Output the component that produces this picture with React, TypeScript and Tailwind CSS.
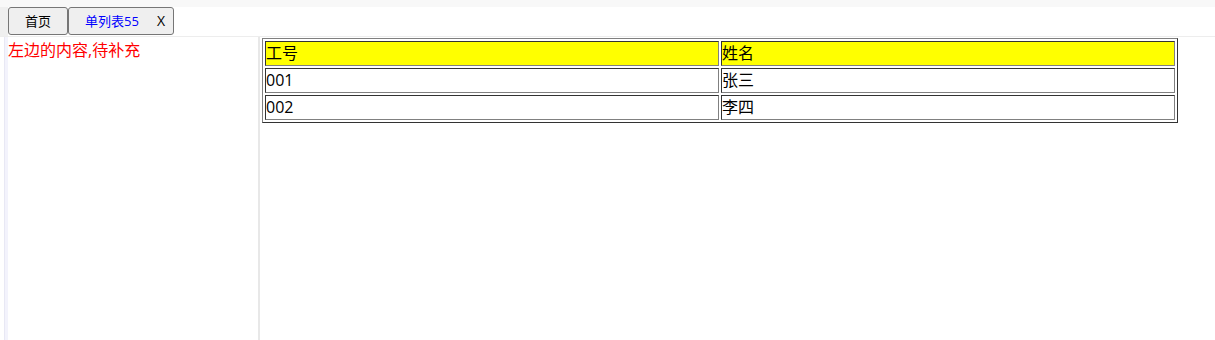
const rows = [
    { id: "001", name: "张三" },
    { id: "002", name: "李四" },
]

const cell = "border-t border-l border-t-[#333333] border-l-[#333333] border-b border-r border-b-[#808080] border-r-[#808080] px-0 h-[25px] leading-[21px] text-left font-normal align-middle"

const App = () => {
    return (
        <div className="w-[1215px] h-[340px] overflow-hidden bg-white text-black font-['Open_Sans','Noto_Sans_CJK_SC',sans-serif]">
            <div className="h-[7px] bg-[#f8f8f8]" />
            <div className="flex h-[30px] border-b border-[#ededed]">
                <div className="w-[8px] bg-[#efefef]" />
                <button className="w-[60px] h-[28px] bg-[#efefef] border border-[#767676] rounded-[3px] text-[13px] leading-[26px] text-black">首页</button>
                <button className="w-[106px] h-[28px] bg-[#efefef] border border-[#767676] rounded-[3px] text-[13px] leading-[26px] flex items-center pl-[16px]">
                    <span className="text-[#0000ff]">单列表55</span>
                    <span className="ml-[18px] text-black text-[14px]">X</span>
                </button>
            </div>
            <div className="flex h-[303px]">
                <div className="w-[4px]" />
                <div className="w-[4px] bg-[#f3f3fc] border-l border-[#e8e8f4]" />
                <div className="w-[250px] text-[16px] leading-[24px] text-[#ff0000] pt-[1px]">左边的内容,待补充</div>
                <div className="w-[2px] bg-[#e8e8e8]" />
                <div className="flex-1 pl-[2px] pt-[1px]">
                    <table className="w-[916px] border-separate border-spacing-[2px] border-t border-l border-t-[#808080] border-l-[#808080] border-b border-r border-b-[#333333] border-r-[#333333] text-[16px]">
                        <thead>
                            <tr className="bg-[#ffff00]">
                                <th className={cell}>工号</th>
                                <th className={cell}>姓名</th>
                            </tr>
                        </thead>
                        <tbody>
                            {rows.map(r => (
                                <tr key={r.id}>
                                    <td className={cell}>{r.id}</td>
                                    <td className={cell}>{r.name}</td>
                                </tr>
                            ))}
                        </tbody>
                    </table>
                </div>
            </div>
        </div>
    )
}

export default App
